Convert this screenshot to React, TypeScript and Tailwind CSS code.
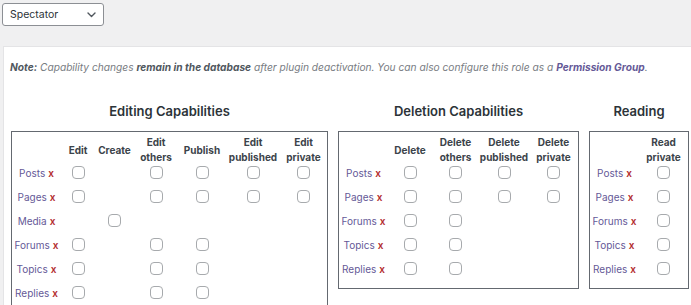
import { Fragment } from "react";

type Row = [string, number[]];

type Group = {
  title: string;
  cols: string;
  headers: string[][];
  rows: Row[];
};

const groups: Group[] = [
  {
    title: "Editing Capabilities",
    cols: "grid-cols-[49px_34px_39px_44px_48px_54px_47px]",
    headers: [["Edit"], ["Create"], ["Edit", "others"], ["Publish"], ["Edit", "published"], ["Edit", "private"]],
    rows: [
      ["Posts", [1, 0, 1, 1, 1, 1]],
      ["Pages", [1, 0, 1, 1, 1, 1]],
      ["Media", [0, 1, 0, 0, 0, 0]],
      ["Forums", [1, 0, 1, 1, 0, 0]],
      ["Topics", [1, 0, 1, 1, 0, 0]],
      ["Replies", [1, 0, 1, 1, 0, 0]],
    ],
  },
  {
    title: "Deletion Capabilities",
    cols: "grid-cols-[49px_44px_47px_50px_49px]",
    headers: [["Delete"], ["Delete", "others"], ["Delete", "published"], ["Delete", "private"]],
    rows: [
      ["Posts", [1, 1, 1, 1]],
      ["Pages", [1, 1, 1, 1]],
      ["Forums", [1, 1, 0, 0]],
      ["Topics", [1, 1, 0, 0]],
      ["Replies", [1, 1, 0, 0]],
    ],
  },
  {
    title: "Reading",
    cols: "grid-cols-[49px_49px]",
    headers: [["Read", "private"]],
    rows: [
      ["Posts", [1]],
      ["Pages", [1]],
      ["Forums", [1]],
      ["Topics", [1]],
      ["Replies", [1]],
    ],
  },
];

function Checkbox() {
  return <span className="block w-[13px] h-[13px] rounded-[4px] border border-[#a7aaad] bg-white" />;
}

function CapTable({ group }: { group: Group }) {
  return (
    <div className="flex flex-col items-center">
      <h3 className="text-[13px] leading-[16px] font-semibold text-[#2c3338] mb-[12px] whitespace-nowrap">{group.title}</h3>
      <div className="border border-[#646970] bg-white pt-[3px] pb-[3px]">
        <div className={`grid ${group.cols}`}>
          {/* header row */}
          <div className="h-[30px]" />
          {group.headers.map((lines, i) => (
            <div
              key={i}
              className="h-[30px] flex flex-col items-center justify-center whitespace-nowrap text-[10px] leading-[15px] font-bold text-[#3c434a]"
            >
              {lines.map((l) => (
                <span key={l}>{l}</span>
              ))}
            </div>
          ))}

          {group.rows.map(([label, checks]) => (
            <Fragment key={label}>
              <div className="h-[24px] flex justify-center whitespace-nowrap text-[10px] leading-[14px] pt-[1px]">
                <span className="text-[#655997]">{label}</span>
                <span className="text-[#b32d2e] font-semibold ml-[3px]">x</span>
              </div>
              {checks.map((c, j) => (
                <div key={j} className="h-[24px] flex justify-center pt-[1px]">
                  {c ? <Checkbox /> : null}
                </div>
              ))}
            </Fragment>
          ))}
        </div>
      </div>
    </div>
  );
}

export default function App() {
  return (
    <div className="w-[691px] h-[305px] overflow-hidden bg-[#f0f0f1] font-['Inter',sans-serif]">
      {/* role select */}
      <div className="ml-[2px] pt-[3px]">
        <div className="w-[102px] h-[23px] bg-white border border-[#8c8f94] rounded-[3px] flex items-center justify-between pl-[7px] pr-[7px]">
          <span className="text-[10.5px] text-[#2c3338]">Spectator</span>
          <svg width="9" height="6" viewBox="0 0 9 6" fill="none">
            <path d="M1 1l3.5 3.5L8 1" stroke="#50575e" strokeWidth="1.4" strokeLinecap="round" strokeLinejoin="round" />
          </svg>
        </div>
      </div>

      {/* settings panel */}
      <div className="ml-[3px] mt-[20px] w-[720px] h-[300px] bg-white border border-[#e4e4e6] pt-[13px] px-[7px]">
        <p className="text-[10.2px] leading-[14px] italic text-[#787c82] -ml-[1px]">
          <span className="font-bold text-[#50575e]">Note:</span> Capability changes{" "}
          <span className="font-bold text-[#50575e]">remain in the database</span> after plugin deactivation. You can also
          configure this role as a <span className="font-bold text-[#655997]">Permission Group</span>.
        </p>

        <div className="flex items-start gap-[10px] mt-[29px]">
          {groups.map((g) => (
            <CapTable key={g.title} group={g} />
          ))}
        </div>
      </div>
    </div>
  );
}
